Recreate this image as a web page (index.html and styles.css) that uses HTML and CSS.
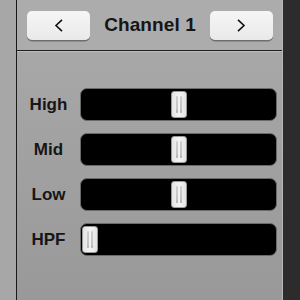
FILE: index.html
```html
<!DOCTYPE html>
<html lang="en">
<head>
  <meta charset="UTF-8">
  <title>Channel EQ</title>
  <link rel="stylesheet" href="styles.css">
</head>
<body>
  <div class="side-left"></div>
  <div class="panel">
    <div class="header">
      <button class="nav-btn" aria-label="Previous">
        <svg width="10" height="13" viewBox="0 0 10 13"><polyline points="8,0.8 2,6.5 8,12.2" fill="none" stroke="#111" stroke-width="1.6"/></svg>
      </button>
      <div class="title">Channel 1</div>
      <button class="nav-btn" aria-label="Next">
        <svg width="10" height="13" viewBox="0 0 10 13"><polyline points="2,0.8 8,6.5 2,12.2" fill="none" stroke="#111" stroke-width="1.6"/></svg>
      </button>
    </div>

    <div class="rows">
      <div class="row">
        <div class="label">High</div>
        <div class="track"><div class="thumb" style="left:90px"></div></div>
      </div>
      <div class="row">
        <div class="label">Mid</div>
        <div class="track"><div class="thumb" style="left:90px"></div></div>
      </div>
      <div class="row">
        <div class="label">Low</div>
        <div class="track"><div class="thumb" style="left:90px"></div></div>
      </div>
      <div class="row">
        <div class="label">HPF</div>
        <div class="track"><div class="thumb" style="left:1px"></div></div>
      </div>
    </div>
  </div>
  <div class="side-right"></div>
</body>
</html>
```

FILE: styles.css
```css
html, body { margin:0; height:100%; }
body { display:flex; width:300px; height:300px; overflow:hidden; font-family:"Liberation Sans", Arial, sans-serif; background:#a6a6a6; }

.side-left { width:16px; background:#a7a7a7; border-right:1px solid #1a1a1a; }
.side-right { flex:1; background:#2c2c2c; }

.panel { width:265px; border-right:1px solid #b8b8b8; background:linear-gradient(#aaaaaa, #999999); display:flex; flex-direction:column; }

/* Header */
.header { height:51px; box-sizing:border-box; display:flex; align-items:center; justify-content:space-between; padding:0 9px 0 10px; background:#acacac; border-bottom:1px solid #1e1e1e; box-shadow:0 1px 0 #bdbdbd; }
.title { font-size:19px; font-weight:bold; color:#151515; letter-spacing:0.1px; }
.nav-btn { width:63px; height:29px; border:none; border-radius:5px; background:linear-gradient(#f6f6f6, #e9e9e9); box-shadow:0 1.5px 0.5px #6e6e6e; display:flex; align-items:center; justify-content:center; padding:0; }
.nav-btn svg { display:block; }

/* Sliders */
.rows { padding-top:37px; display:flex; flex-direction:column; gap:12px; }
.row { display:flex; align-items:center; height:33px; }
.label { width:63px; text-align:center; font-size:17px; font-weight:bold; color:#161616; }
.track { position:relative; width:197px; height:33px; box-sizing:border-box; background:#000; border:1px solid #6a6a6a; border-radius:7px; }
.thumb { position:absolute; top:2px; width:16px; height:27px; box-sizing:border-box; border:1px solid #9a9a9a; border-radius:3px; background:linear-gradient(90deg, #e4e4e4, #f4f4f4 50%, #e4e4e4); }
.thumb::before, .thumb::after { content:""; position:absolute; top:4px; width:2px; height:17px; background:linear-gradient(#cfcfcf, #c4c4c4 80%, #a9a9a9); border-radius:1px; }
.thumb::before { left:4px; }
.thumb::after { right:4px; }
```
